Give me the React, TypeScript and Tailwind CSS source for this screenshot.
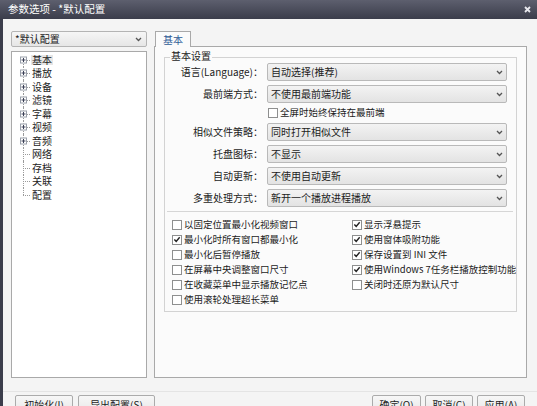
import React from "react";

const font = "font-['Noto_Sans_CJK_SC','Noto_Sans',sans-serif]";

const Chevron = () => (
  <svg width="7" height="5" viewBox="0 0 7 5" className="shrink-0">
    <path d="M1 1 L3.5 3.5 L6 1" fill="none" stroke="#555" strokeWidth="1.3" />
  </svg>
);

const Check = () => (
  <svg width="9" height="9" viewBox="0 0 9 9">
    <path d="M1.5 4.5 L3.6 6.6 L7.5 2" fill="none" stroke="#222" strokeWidth="1.6" />
  </svg>
);

const Checkbox = ({ checked }: { checked?: boolean }) => (
  <span className="flex size-[10px] shrink-0 items-center justify-center border border-[#8e8f8f] bg-white">
    {checked && <Check />}
  </span>
);

const Dropdown = ({ value }: { value: string }) => (
  <div className="flex h-[18px] items-center justify-between rounded-[2px] border border-[#b9b9b9] bg-gradient-to-b from-[#f3f3f3] to-[#e3e3e3] pl-[3px] pr-[3px] text-[#1c1c1c]">
    <span>{value}</span>
    <Chevron />
  </div>
);

const rows: [string, string][] = [
  ["语言(Language)：", "自动选择(推荐)"],
  ["最前端方式：", "不使用最前端功能"],
  ["相似文件策略：", "同时打开相似文件"],
  ["托盘图标：", "不显示"],
  ["自动更新：", "不使用自动更新"],
  ["多重处理方式：", "新开一个播放进程播放"],
];

const DropRow = ({ label, value }: { label: string; value: string }) => (
  <div className="flex h-[22px] items-center">
    <span className="w-[98px] shrink-0 text-right text-[#1c1c1c]">{label}</span>
    <div className="ml-[4px] min-w-0 flex-1">
      <Dropdown value={value} />
    </div>
  </div>
);

const leftChecks: [string, boolean][] = [
  ["以固定位置最小化视频窗口", false],
  ["最小化时所有窗口都最小化", true],
  ["最小化后暂停播放", false],
  ["在屏幕中央调整窗口尺寸", false],
  ["在收藏菜单中显示播放记忆点", false],
  ["使用滚轮处理超长菜单", false],
];

const rightChecks: [string, boolean][] = [
  ["显示浮悬提示", true],
  ["使用窗体吸附功能", true],
  ["保存设置到 INI 文件", true],
  ["使用Windows 7任务栏播放控制功能", true],
  ["关闭时还原为默认尺寸", false],
];

const CheckRow = ({ label, checked }: { label: string; checked: boolean }) => (
  <div className="flex h-[15px] items-center gap-[2px] whitespace-nowrap text-[9.5px] text-[#1c1c1c]">
    <Checkbox checked={checked} />
    <span>{label}</span>
  </div>
);

const treeItems: [string, boolean][] = [
  ["基本", true],
  ["播放", true],
  ["设备", true],
  ["滤镜", true],
  ["字幕", true],
  ["视频", true],
  ["音频", true],
  ["网络", false],
  ["存档", false],
  ["关联", false],
  ["配置", false],
];

const TreeRow = ({ label, expandable, first, last, selected }: { label: string; expandable: boolean; first: boolean; last: boolean; selected: boolean }) => (
  <div className="flex h-[13.5px] items-center">
    <span className="relative h-full w-[19px] shrink-0">
      <span
        className={
          "absolute left-[11px] border-l border-dotted border-[#9a9a9a] " +
          (first ? "top-1/2 bottom-0" : last ? "top-0 bottom-1/2" : "top-0 bottom-0")
        }
      />
      <span className="absolute left-[11px] top-1/2 w-[7px] border-t border-dotted border-[#9a9a9a]" />
      {expandable && (
        <span className="absolute left-[8px] top-1/2 flex size-[7px] -translate-y-1/2 items-center justify-center border border-[#9aa0aa] bg-white">
          <svg width="5" height="5" viewBox="0 0 5 5">
            <path d="M0.5 2.5 H4.5 M2.5 0.5 V4.5" stroke="#3a3f55" strokeWidth="1" />
          </svg>
        </span>
      )}
    </span>
    <span className={"px-[1px] text-[#1c1c1c] " + (selected ? "bg-[#e6e6e6]" : "")}>{label}</span>
  </div>
);

const Button = ({ label, w }: { label: string; w: string }) => (
  <div className={"flex h-[20px] items-center justify-center rounded-[2px] border border-[#ababab] bg-gradient-to-b from-[#f7f7f7] to-[#e6e6e6] text-[#1c1c1c] " + w}>
    {label}
  </div>
);

export default function App() {
  return (
    <div className={"flex h-[406px] w-[537px] flex-col overflow-hidden bg-[#f4f4f4] text-[10px] leading-none " + font}>
      {/* title bar */}
      <div className="flex h-[19px] shrink-0 items-center justify-between bg-gradient-to-b from-[#5d5f6e] to-[#3b3d4b] pl-[8px] pr-[6px] text-white">
        <span className="text-[10.5px]">参数选项 - *默认配置</span>
        <svg width="7" height="7" viewBox="0 0 7 7">
          <path d="M1 1 L6 6 M6 1 L1 6" stroke="#e8e8ee" strokeWidth="1.8" />
        </svg>
      </div>

      <div className="flex flex-1 flex-col border-l-[3px] border-[#3b3d4b]">
        <div className="flex gap-[7px] pl-[8px] pr-[10px] pt-[12px]">
          {/* left column */}
          <div className="flex w-[136px] shrink-0 flex-col">
            <div className="flex h-[16px] items-center justify-between rounded-[2px] border border-[#b4b4b4] bg-gradient-to-b from-[#f6f6f6] to-[#e6e6e6] pl-[3px] pr-[4px] text-[#1c1c1c]">
              <span>*默认配置</span>
              <Chevron />
            </div>
            <div className="mt-[4px] h-[327px] border border-[#a9a9a9] bg-white pt-[1px]">
              {treeItems.map(([label, exp], i) => (
                <TreeRow
                  key={label}
                  label={label}
                  expandable={exp}
                  first={i === 0}
                  last={i === treeItems.length - 1}
                  selected={i === 0}
                />
              ))}
            </div>
          </div>

          {/* right column */}
          <div className="flex min-w-0 flex-1 flex-col">
            <div className="relative z-10 ml-[1px] flex h-[16px] w-[36px] items-center justify-center border border-b-0 border-[#a9a9a9] bg-[#fbfbfb] text-[#2f5c96]">
              基本
            </div>
            <div className="-mt-[1px] h-[332px] border border-[#a9a9a9] bg-[#fbfbfb] px-[9px] pt-[10px]">
              <div className="relative border border-[#d3d3d3] pb-[4px] pt-[3px]">
                <span className="absolute -top-[7px] left-[5px] bg-[#fbfbfb] px-[1px] text-[#1c1c1c]">基本设置</span>
                <div className="flex flex-col pr-[9px]">
                  <DropRow label={rows[0][0]} value={rows[0][1]} />
                  <DropRow label={rows[1][0]} value={rows[1][1]} />
                  <div className="flex h-[16px] items-center pl-[103px]">
                    <CheckRow label="全屏时始终保持在最前端" checked={false} />
                  </div>
                  {rows.slice(2).map(([l, v]) => (
                    <DropRow key={l} label={l} value={v} />
                  ))}
                </div>
                <div className="ml-[2px] mr-[3px] mt-[2px] h-px bg-[#d6d6d6]" />
                <div className="flex overflow-hidden pl-[7px] pt-[5px]">
                  <div className="flex w-[180px] shrink-0 flex-col">
                    {leftChecks.map(([l, c]) => (
                      <CheckRow key={l} label={l} checked={c} />
                    ))}
                  </div>
                  <div className="flex min-w-0 flex-col">
                    {rightChecks.map(([l, c]) => (
                      <CheckRow key={l} label={l} checked={c} />
                    ))}
                  </div>
                </div>
              </div>
            </div>
          </div>
        </div>

        {/* bottom buttons */}
        <div className="mt-[13px] border-t border-[#e4e4e4] pt-[3px]">
          <div className="flex items-center justify-between pl-[12px] pr-[12px]">
            <div className="flex gap-[5px]">
              <Button label="初始化(I)" w="w-[58px]" />
              <Button label="导出配置(S)" w="w-[77px]" />
            </div>
            <div className="flex gap-[4px]">
              <Button label="确定(O)" w="w-[49px]" />
              <Button label="取消(C)" w="w-[48px]" />
              <Button label="应用(A)" w="w-[48px]" />
            </div>
          </div>
        </div>
      </div>
    </div>
  );
}
